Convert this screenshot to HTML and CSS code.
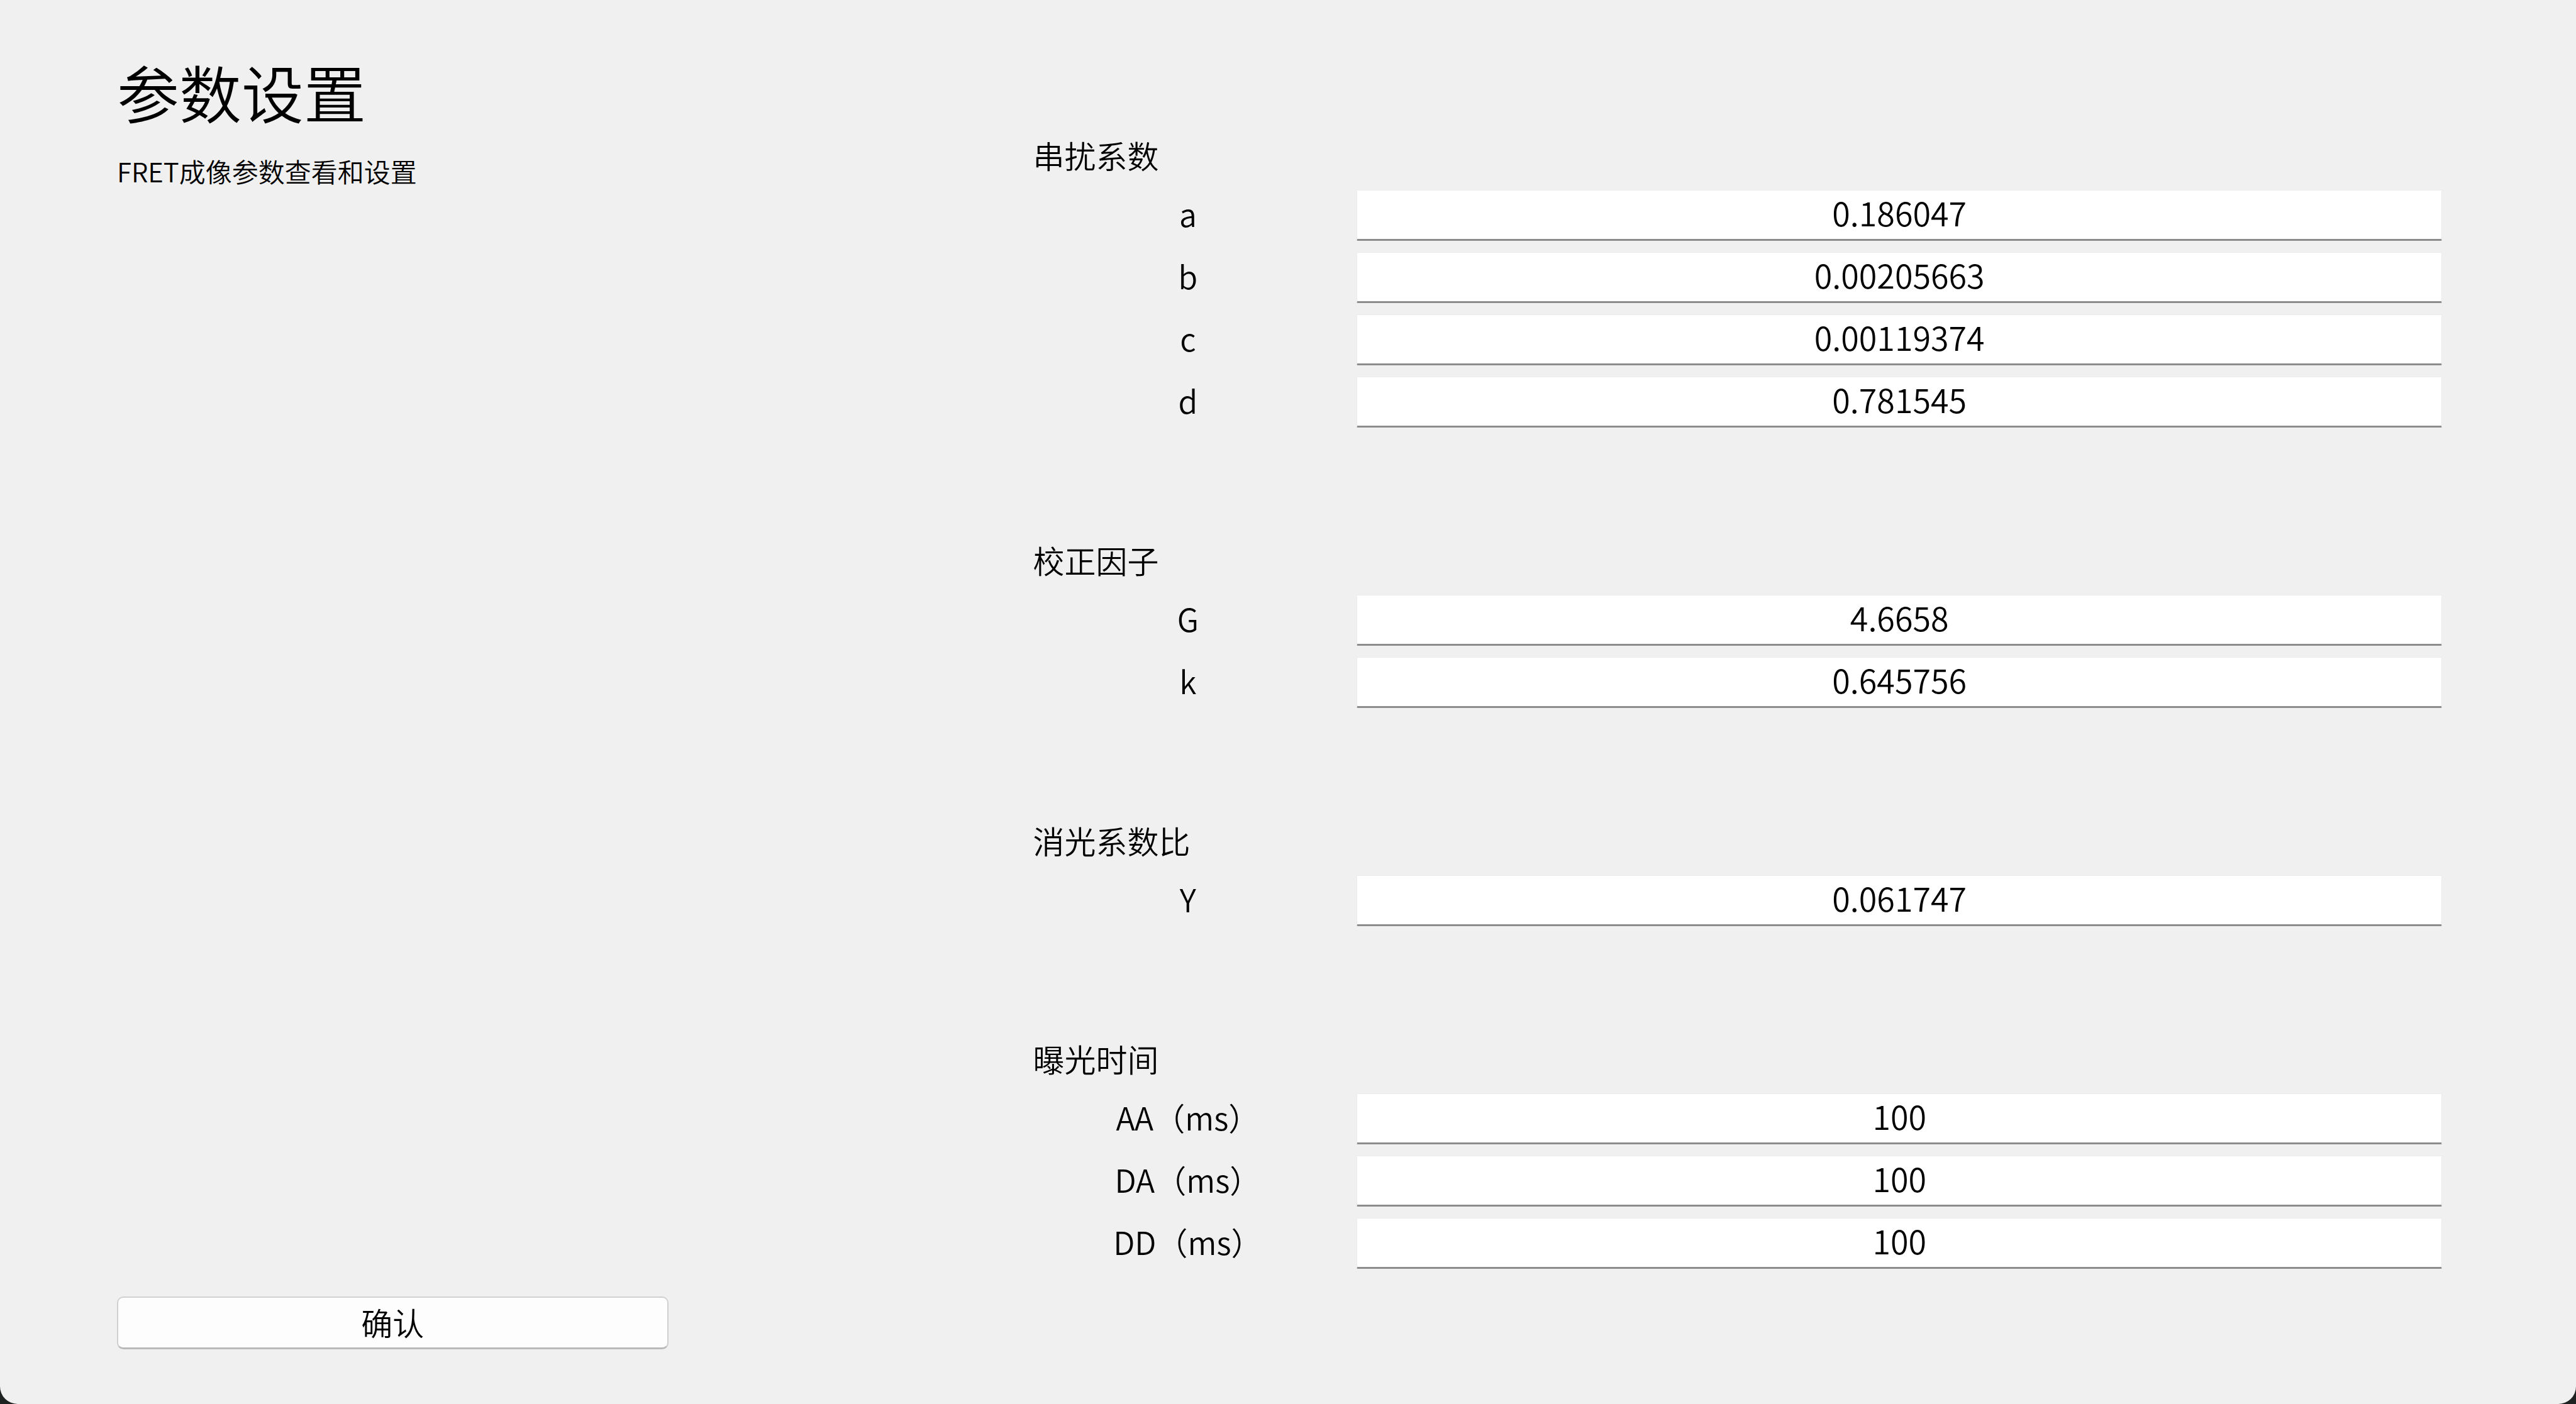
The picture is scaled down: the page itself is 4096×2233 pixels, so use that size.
FILE: index.html
```html
<!DOCTYPE html>
<html lang="zh-CN">
<head>
<meta charset="utf-8">
<meta name="viewport" content="width=device-width, initial-scale=1">
<title>参数设置</title>
<link rel="stylesheet" href="styles.css">
</head>
<body>
<form class="window">
  <div class="intro">
    <header class="intro-header">
      <h1 class="title">参数设置</h1>
      <p class="subtitle">FRET成像参数查看和设置</p>
    </header>
    <button class="confirm" type="button">确认</button>
  </div>
  <main class="groups">
    <section class="group">
      <h2 class="group-title">串扰系数</h2>
      <div class="row"><label class="label" for="a">a</label><input class="field" id="a" type="text" value="0.186047"></div>
      <div class="row"><label class="label" for="b">b</label><input class="field" id="b" type="text" value="0.00205663"></div>
      <div class="row"><label class="label" for="c">c</label><input class="field" id="c" type="text" value="0.00119374"></div>
      <div class="row"><label class="label" for="d">d</label><input class="field" id="d" type="text" value="0.781545"></div>
    </section>
    <section class="group">
      <h2 class="group-title">校正因子</h2>
      <div class="row"><label class="label" for="g">G</label><input class="field" id="g" type="text" value="4.6658"></div>
      <div class="row"><label class="label" for="k">k</label><input class="field" id="k" type="text" value="0.645756"></div>
    </section>
    <section class="group">
      <h2 class="group-title">消光系数比</h2>
      <div class="row"><label class="label" for="y">Y</label><input class="field" id="y" type="text" value="0.061747"></div>
    </section>
    <section class="group">
      <h2 class="group-title">曝光时间</h2>
      <div class="row"><label class="label" for="aa">AA（ms）</label><input class="field" id="aa" type="text" value="100"></div>
      <div class="row"><label class="label" for="da">DA（ms）</label><input class="field" id="da" type="text" value="100"></div>
      <div class="row"><label class="label" for="dd">DD（ms）</label><input class="field" id="dd" type="text" value="100"></div>
    </section>
  </main>
</form>
</body>
</html>
```
FILE: styles.css
```css
* {
  box-sizing: border-box;
}

html {
  background: #1e2221;
}

body {
  margin: 0;
  color: #000;
  font-family: "Noto Sans CJK SC", "Noto Sans", sans-serif;
  font-size: 50px;
  font-weight: 350;
}

h1,
h2,
p {
  margin: 0;
  font-weight: inherit;
}

.window {
  display: grid;
  grid-template-columns: minmax(0, 13fr) minmax(0, 20fr);
  min-height: 100vh;
  padding: 85px 213px 87px 186px;
  background: #f0f0f0;
  border-radius: 0 0 28px 28px;
}

/* Left side: page heading on top, confirm button at the bottom */
.intro {
  display: flex;
  flex-direction: column;
  justify-content: space-between;
}

.intro-header {
  display: flex;
  flex-direction: column;
  gap: 37px;
}

.title {
  font-size: 99px;
  line-height: 120px;
}

.subtitle {
  font-size: 42px;
  line-height: 60px;
}

.confirm {
  width: 60.2%;
  height: 84px;
  padding: 0 0 4px;
  border: 2px solid #d0d0d0;
  border-bottom: 3px solid #b9b9b9;
  border-radius: 10px;
  background: #fdfdfd;
  color: inherit;
  font: inherit;
  line-height: 72px;
}

/* Right side: parameter groups */
.groups {
  display: flex;
  flex-direction: column;
  gap: 176px;
  padding-top: 127px;
}

.group {
  display: flex;
  flex-direction: column;
  gap: 18px;
}

.group-title {
  padding-bottom: 4px;
  font-size: 50px;
  line-height: 68px;
}

.row {
  display: grid;
  grid-template-columns: minmax(0, 22fr) minmax(0, 77fr);
  column-gap: 22px;
  align-items: center;
}

.label {
  padding-bottom: 8px;
  line-height: 72px;
  text-align: center;
}

.field {
  width: 100%;
  height: 81px;
  padding: 0 0 8px;
  border: 1px solid #ebebeb;
  border-bottom: 3px solid #8c8c8c;
  border-radius: 2px;
  background: #fff;
  color: inherit;
  font: inherit;
  font-size: 52px;
  line-height: 69px;
  text-align: center;
}
```
